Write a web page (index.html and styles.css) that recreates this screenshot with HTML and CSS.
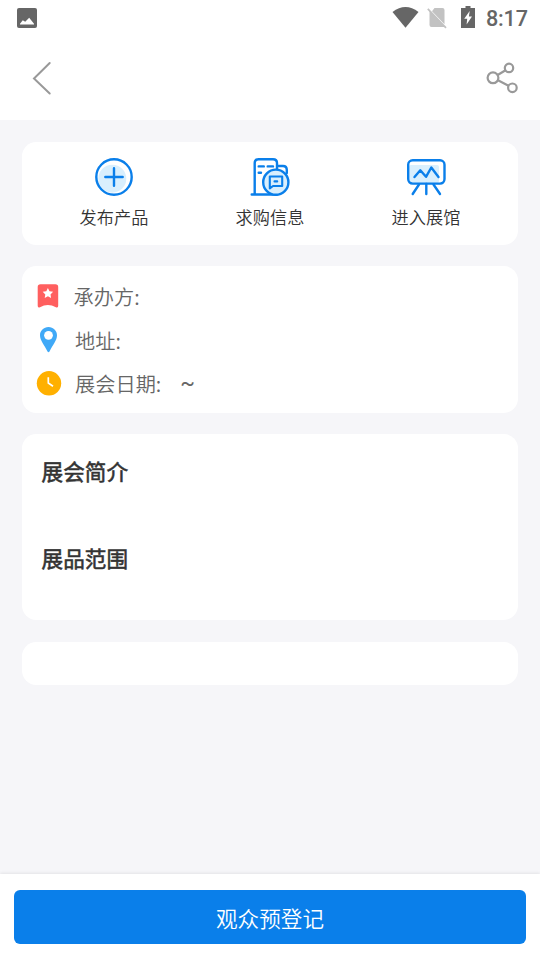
FILE: index.html
```html
<!DOCTYPE html>
<html lang="zh-CN">
<head>
<meta charset="utf-8">
<title>展会</title>
<link rel="stylesheet" href="styles.css">
</head>
<body>
<header class="top">
  <div class="status">
    <svg class="photo" width="20" height="20" viewBox="0 0 20 20"><rect width="20" height="20" rx="2" fill="#666"/><path d="M3 16.5V15.8L5.8 12.2 8.2 13.8 12.2 9.7 17 15.8V16.5Z" fill="#fff"/></svg>
    <svg class="wifi" width="27" height="21" viewBox="0 0 27 21"><path d="M.5 4.9Q13.5-4.7 26.5 4.9L13.5 20.8Z" fill="#666"/></svg>
    <svg class="sim" width="20" height="22" viewBox="0 0 20 22"><path d="M7.5 1H15.5Q17.5 1 17.5 3V17.3L5 4.2ZM2.5 3.6 18 20H4.5Q2.5 20 2.5 18Z" fill="#c2c2c2"/><path d="M.8 1.8 19 20.8" stroke="#c2c2c2" stroke-width="1.7"/></svg>
    <svg class="battery" width="14" height="22" viewBox="0 0 14 22"><path d="M4.5 0H9.5V2H14V22H0V2H4.5Z" fill="#666"/><path d="M8.7 5 3.2 12.8H6.2L5.6 18.5 11 10.4H7.9Z" fill="#fff"/></svg>
    <span class="time">8:17</span>
  </div>
  <nav class="nav">
    <svg width="20" height="34" viewBox="0 0 20 34" fill="none" stroke="#999" stroke-width="2" stroke-linecap="round"><path d="M17.7 2 2 17.5 17.7 32.5"/></svg>
    <svg width="34" height="34" viewBox="0 0 34 34" fill="none" stroke="#999" stroke-width="2.2"><circle cx="9" cy="16.8" r="5.4"/><circle cx="25" cy="6.9" r="4.2"/><circle cx="28.4" cy="26.8" r="4.3"/><path d="M13.7 14 21.5 9.2M14 19.3 24.5 24.8"/></svg>
  </nav>
</header>
<main class="content">
  <section class="card actions">
    <div class="action">
      <svg width="40" height="40" viewBox="94 157 40 40" fill="none" stroke="#0a7fea" stroke-width="2.4" stroke-linecap="round"><circle cx="112.3" cy="178.7" r="14" fill="#d9effd" stroke="none"/><circle cx="114" cy="177" r="17.7"/><path d="M105.3 177H122.7M114 168.3V185.7"/></svg>
      <span>发布产品</span>
    </div>
    <div class="action">
      <svg width="40" height="40" viewBox="250 157 40 40" fill="none" stroke="#0a7fea" stroke-width="2.4" stroke-linecap="round" stroke-linejoin="round"><path d="M251.7 194.5H277M254.7 194V163Q254.7 159.2 258.5 159.2H273Q277 159.2 277 163V169M278 166H283Q286.8 166 286.8 170V173M258.7 166.4H263.8M267.7 166.4H273M258.7 172.7H261"/><circle cx="275.8" cy="182.2" r="12.6" fill="#d9effd"/><path stroke-width="2.1" d="M269.8 176.5H282.2V186H273L269.8 188.3ZM274.5 181.4H277.2"/></svg>
      <span>求购信息</span>
    </div>
    <div class="action">
      <svg width="40" height="40" viewBox="406 157 40 40" fill="none" stroke="#0a7fea" stroke-width="2.4" stroke-linecap="round" stroke-linejoin="round"><rect x="409" y="165" width="30" height="18" rx="2" fill="#d9effd" stroke="none"/><rect x="408.2" y="160.2" width="36.3" height="23.4" rx="4.5"/><path d="M414.5 177 420.3 170.3 426 176.8 431.3 167.5 438.5 177M419 184.5 412.7 194M426.3 184V194M433.5 184.5 440 194"/></svg>
      <span>进入展馆</span>
    </div>
  </section>
  <section class="card info">
    <div class="row first">
      <svg width="26" height="26" viewBox="0 0 26 26"><path d="M4.5.2H19.4Q22.2.2 22.2 3V21.7Q22.2 24.3 19.9 23.2 11.8 18.6 4 23.2 1.7 24.3 1.7 21.7V3Q1.7.2 4.5.2Z" fill="#ff5f5f"/><path d="m11.9 4 1.6 3.3 3.6.5-2.6 2.6.6 3.6-3.2-1.7-3.2 1.7.6-3.6-2.6-2.6 3.6-.5Z" fill="#fff"/></svg>
      <span>承办方:</span>
    </div>
    <div class="row">
      <svg width="26" height="26" viewBox="0 0 26 26"><path d="M12.5 0C7.7 0 4 3.7 4 8.3 4 13.5 8.5 18.5 11.5 24.5Q12.5 26 13.5 24.5C16.5 18.5 21 13.5 21 8.3 21 3.7 17.3 0 12.5 0Z" fill="#40a9f7"/><circle cx="12.5" cy="8.3" r="4.4" fill="#fff"/></svg>
      <span>地址:</span>
    </div>
    <div class="row">
      <svg width="26" height="26" viewBox="0 0 26 26"><circle cx="13" cy="13.3" r="12.2" fill="#ffb000"/><path d="M12.3 7.3V13L17 16.2" fill="none" stroke="#fff" stroke-width="1.7"/></svg>
      <span>展会日期:</span><span class="tilde">~</span>
    </div>
  </section>
  <section class="card intro">
    <h2>展会简介</h2>
    <h2>展品范围</h2>
  </section>
  <section class="card blank"></section>
</main>
<footer class="bottom"><button class="register">观众预登记</button></footer>
</body>
</html>
```
FILE: styles.css
```css
* { box-sizing: border-box; }
body {
  margin: 0;
  height: 960px;
  display: flex;
  flex-direction: column;
  overflow: hidden;
  background: #f6f6f9;
  color: #333;
  font-family: "Noto Sans CJK SC", sans-serif;
  font-weight: 350;
}
svg { display: block; flex: none; }
.top { height: 120px; background: #fff; flex: none; }
.status {
  height: 36px;
  display: flex;
  align-items: center;
  padding: 0 12px 0 17px;
}
.wifi { margin-left: auto; margin-right: 8px; margin-top: -2px; }
.sim { margin-right: 14px; }
.battery { margin-right: 11px; margin-top: -2px; }
.time {
  width: 42px;
  font: 500 21.6px/36px Roboto, sans-serif;
  color: #666;
  letter-spacing: -0.2px;
  padding-top: 1px;
}
.nav {
  height: 84px;
  display: flex;
  justify-content: space-between;
  align-items: center;
  padding: 0 22px 0 32px;
}
.content {
  flex: 1;
  display: flex;
  flex-direction: column;
  gap: 21.4px;
  padding: 21.6px 21.6px 0;
}
.card { background: #fff; border-radius: 14.4px; flex: none; }
.actions {
  height: 103px;
  display: grid;
  grid-template-columns: repeat(3, 156px);
  justify-content: center;
  padding-top: 15px;
}
.action {
  display: flex;
  flex-direction: column;
  align-items: center;
  font-size: 17.2px;
  line-height: 26px;
}
.action span { margin-top: 7px; }
.info { height: 147px; padding: 9px 14px; }
.row {
  height: 43.4px;
  display: flex;
  align-items: center;
  font-size: 20.2px;
  color: #666;
}
.row span { margin-left: 13.5px; }
.row.first span { margin-left: 12px; }
.row .tilde {
  margin-left: 19px;
  font: 400 21.6px/30px Roboto, sans-serif;
}
.intro { height: 186px; padding: 19px 20px 0; }
h2 {
  margin: 0 0 51px;
  font-size: 21.6px;
  line-height: 36px;
  font-weight: 400;
  -webkit-text-stroke: 0.55px #333;
}
.blank { height: 43.5px; }
.bottom {
  height: 86px;
  flex: none;
  padding: 16px 14.4px;
  background: #fff;
  box-shadow: 0 -1px 3px rgba(0, 0, 0, 0.08);
}
.register {
  display: block;
  width: 100%;
  height: 54px;
  border: 0;
  border-radius: 6px;
  padding: 2px 0 0;
  background: #0a7fea;
  color: #fff;
  font: 350 21.6px/50px "Noto Sans CJK SC", sans-serif;
}
```
